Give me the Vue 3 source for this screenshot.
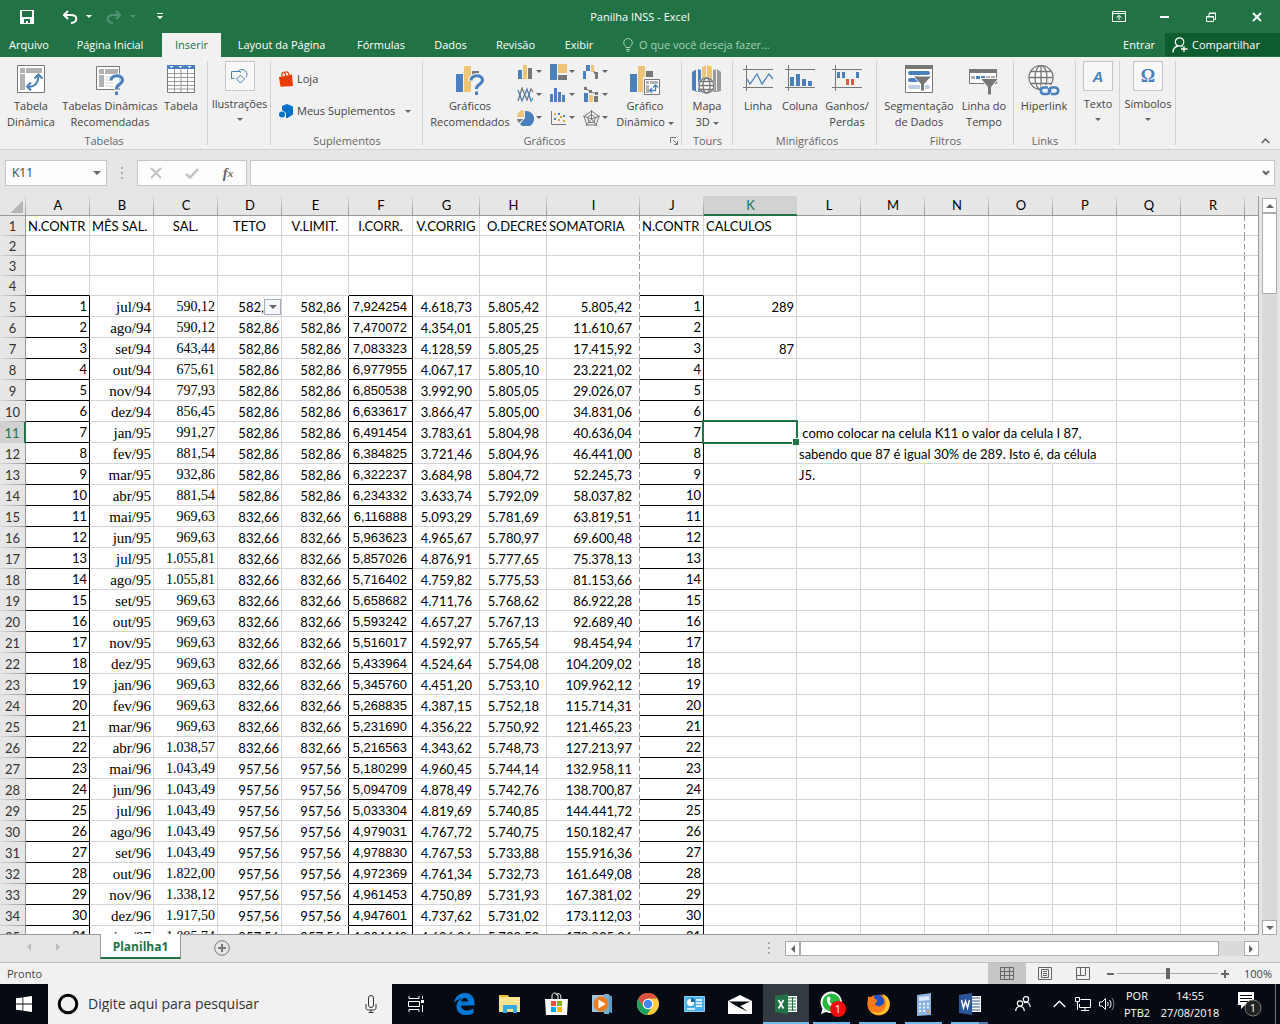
<script setup>
const tabs = ['Arquivo', 'Página Inicial', 'Inserir', 'Layout da Página', 'Fórmulas', 'Dados', 'Revisão', 'Exibir']
const letters = 'ABCDEFGHIJKLMNOPQR'.split('')
const titles = ['N.CONTR', 'MÊS SAL.', 'SAL.', 'TETO', 'V.LIMIT.', 'I.CORR.', 'V.CORRIG', 'O.DECRES', 'SOMATORIA', 'N.CONTR', 'CALCULOS']
const trailing = ['l', 'm', 'n', 'o', 'p', 'q', 'r', 's']

const raw = `jul/94 590,12 7,924254 4.618,73 5.805,42 5.805,42
ago/94 590,12 7,470072 4.354,01 5.805,25 11.610,67
set/94 643,44 7,083323 4.128,59 5.805,25 17.415,92
out/94 675,61 6,977955 4.067,17 5.805,10 23.221,02
nov/94 797,93 6,850538 3.992,90 5.805,05 29.026,07
dez/94 856,45 6,633617 3.866,47 5.805,00 34.831,06
jan/95 991,27 6,491454 3.783,61 5.804,98 40.636,04
fev/95 881,54 6,384825 3.721,46 5.804,96 46.441,00
mar/95 932,86 6,322237 3.684,98 5.804,72 52.245,73
abr/95 881,54 6,234332 3.633,74 5.792,09 58.037,82
mai/95 969,63 6,116888 5.093,29 5.781,69 63.819,51
jun/95 969,63 5,963623 4.965,67 5.780,97 69.600,48
jul/95 1.055,81 5,857026 4.876,91 5.777,65 75.378,13
ago/95 1.055,81 5,716402 4.759,82 5.775,53 81.153,66
set/95 969,63 5,658682 4.711,76 5.768,62 86.922,28
out/95 969,63 5,593242 4.657,27 5.767,13 92.689,40
nov/95 969,63 5,516017 4.592,97 5.765,54 98.454,94
dez/95 969,63 5,433964 4.524,64 5.754,08 104.209,02
jan/96 969,63 5,345760 4.451,20 5.753,10 109.962,12
fev/96 969,63 5,268835 4.387,15 5.752,18 115.714,31
mar/96 969,63 5,231690 4.356,22 5.750,92 121.465,23
abr/96 1.038,57 5,216563 4.343,62 5.748,73 127.213,97
mai/96 1.043,49 5,180299 4.960,45 5.744,14 132.958,11
jun/96 1.043,49 5,094709 4.878,49 5.742,76 138.700,87
jul/96 1.043,49 5,033304 4.819,69 5.740,85 144.441,72
ago/96 1.043,49 4,979031 4.767,72 5.740,75 150.182,47
set/96 1.043,49 4,978830 4.767,53 5.733,88 155.916,36
out/96 1.822,00 4,972369 4.761,34 5.732,73 161.649,08
nov/96 1.338,12 4,961453 4.750,89 5.731,93 167.381,02
dez/96 1.917,50 4,947601 4.737,62 5.731,02 173.112,03
jan/97 1.095,74 4,904440 4.696,26 5.730,53 178.835,36`
const rows = raw.split('\n').map((line, i) => {
  const [mes, sal, icorr, vcorr, decr, soma] = line.split(' ')
  const teto = i < 10 ? '582,86' : i < 22 ? '832,66' : '957,56'
  return { n: i + 1, num: i + 5, mes, sal, teto, icorr, vcorr, decr, soma }
})
const notes = {
  11: ' como colocar na celula K11 o valor da celula I 87,',
  12: 'sabendo que 87 é igual 30% de 289. Isto é, da célula',
}
const calc = { 5: '289', 7: '87' }
</script>

<template>
  <div class="app">
    <header class="titlebar">
      <div class="qat">
        <button class="q-save" aria-label="Salvar">
          <svg width="14" height="14" viewBox="0 0 14 14"><path fill="#fff" fill-rule="evenodd" d="M0 0h14v14H0zM2 1v6h10V1zM4 9v4h2v-2h2v2h2V9z" /></svg>
        </button>
        <button class="q-undo" aria-label="Desfazer">
          <svg width="16" height="14" viewBox="0 0 16 14" fill="none" stroke="#fff" stroke-width="2"><path d="M6 1L2 5l4 4M2 5h7c7 0 7 7 0 8" /></svg>
          <i class="tri light"></i>
        </button>
        <button class="q-redo" aria-label="Refazer">
          <svg width="16" height="14" viewBox="0 0 16 14" fill="none" stroke="#549373" stroke-width="2"><path d="M10 1l4 4-4 4M14 5H7C0 5 0 12 7 13" /></svg>
          <i class="tri dim"></i>
        </button>
        <button class="q-more" aria-label="Personalizar">
          <svg width="6" height="7" viewBox="0 0 6 7" fill="#fff"><path d="M0 0h6v1H0zM0 3h6L3 6z" /></svg>
        </button>
      </div>
      <h1>Panilha INSS - Excel</h1>
      <div class="winbtns">
        <button aria-label="Opções da Faixa"><svg width="14" height="11" viewBox="0 0 14 11" fill="none" stroke="#fff"><path d="M.5.5h13v10H.5zM.5 2.500h13M7 9V4.500M4.500 6.500L7 4.500l2.500 2" /></svg></button>
        <button aria-label="Minimizar"><svg width="10" height="3" viewBox="0 0 10 3"><path fill="#fff" d="M0 1h9v2H0z" /></svg></button>
        <button aria-label="Restaurar"><svg width="10" height="10" viewBox="0 0 10 10" fill="none" stroke="#fff"><path d="M.5 4.500h7v5h-7zM.5 5h7M3 4V1.500h6.500V7.500H8M3 1h7" /></svg></button>
        <button aria-label="Fechar"><svg width="10" height="10" viewBox="0 0 10 10" fill="none" stroke="#fff" stroke-width="2"><path d="M1 1l8 8M9 1L1 9" /></svg></button>
      </div>
    </header>

    <nav class="tabs">
      <div class="tablist">
        <button v-for="t in tabs" :key="t" :class="{ active: t === 'Inserir' }">{{ t }}</button>
      </div>
      <label class="tell">
        <svg width="10" height="14" viewBox="0 0 10 14" fill="none" stroke="#a6cfb8"><path d="M3 9.500C3 8 .7 7.500.7 4.700a4.300 4.200 0 018.600 0C9.300 7.500 7 8 7 9.500zM3 11.500h4M3.500 13.300h3" /></svg>
        <input type="text" placeholder="O que você deseja fazer..." />
      </label>
      <button class="entrar">Entrar</button>
      <button class="share">
        <svg width="16" height="16" viewBox="0 0 16 16" fill="none" stroke="#fff" stroke-width="1.300"><circle cx="7.500" cy="5" r="4.200" /><path d="M1 15.500C1.200 11.500 3 9.500 6 9M9.500 9.500l1 .5M12 9v6M9 12h6.500" /></svg>
        Compartilhar
      </button>
    </nav>

    <section class="ribbon">
      <div class="group g-tables">
        <div class="items">
          <button class="big w62">
            <svg width="28" height="28" viewBox="0 0 28 28"><path d="M.5.5h27v27H.5z" fill="#fff" stroke="#777" /><path d="M3 3h5v5H3zM9 3h16v5H9zM3 9h5v16H3z" fill="#b1b1b1" /><path d="M11 21.500c6 1 10-3 10.500-10M14 17.500l-4 4 4 4M17.500 13.500l4-4 4 4" fill="none" stroke="#4a80bd" stroke-width="2" /></svg>
            <span>Tabela<br />Dinâmica</span>
          </button>
          <button class="big w96">
            <svg width="28" height="30" viewBox="0 0 28 30"><path d="M.5 1.500h23v23H.5z" fill="#fff" stroke="#777" /><path d="M3 4h5v5H3zM9 4h13v5H9zM3 10h5v12H3z" fill="#b1b1b1" /><path d="M9 12h10M9 15h7M9 18h8M9 21h8" stroke="#d0d0d0" /><path d="M15 16c0-6 11-7 11-1 0 5-5.500 4-5.500 9.500M20.500 27v3" fill="none" stroke="#f1f1f1" stroke-width="5" /><path d="M15 15.500c0-6 11.500-6.500 11.500-.5 0 4.500-6 4-6 9M20.500 26.500v3.500" fill="none" stroke="#4a80bd" stroke-width="3" /></svg>
            <span>Tabelas Dinâmicas<br />Recomendadas</span>
          </button>
          <button class="big w46">
            <svg width="28" height="28" viewBox="0 0 28 28"><path d="M.5.5h27v27H.5z" fill="#fff" stroke="#777" /><path d="M7.500 4v23M14 4v23M20.500 4v23M1 8.500h26M1 12.500h26M1 16.500h26M1 20.500h26M1 24h26" stroke="#999" /><path d="M0 0h28v4H0z" fill="#4a80bd" /><path d="M2.500 1h4l-2 2zM11.500 1h4l-2 2zM20.500 1h4l-2 2z" fill="#fff" /></svg>
            <span>Tabela</span>
          </button>
        </div>
        <div class="gname">Tabelas</div>
      </div>
      <div class="group g-illus">
        <button class="folded">
          <span class="box"><svg width="17" height="15" viewBox="0 0 17 15" fill="#f8f8f8" stroke="#4a80bd"><circle cx="11" cy="5.500" r="5" /><path d="M.5 2.500h9v7h-9z" /><path d="M9.500 5.500l4.500 4.500-4.500 4.500L5 10z" stroke="#f8f8f8" stroke-width="3" /><path d="M9.500 6l4 4-4 4-4-4z" /></svg></span>
          <span>Ilustrações</span><i class="tri"></i>
        </button>
      </div>
      <div class="group g-addins">
        <div class="stack">
          <button><svg width="14" height="16" viewBox="0 0 14 16"><path d="M0 6l13-2.500 1 11.500L1.500 15.800z" fill="#eb3c00" /><path d="M3 5.500C2 .5 6 0 6.500 3.500V6M5.500 2.500C6 0 9.500 0 10 4" fill="none" stroke="#eb3c00" stroke-width="1.200" /></svg>Loja</button>
          <button><svg width="14" height="14" viewBox="0 0 14 14" fill="#0072c6"><path d="M3 2l5-2 6 2.500v8L8.500 14H7V9L3 6z" /><circle cx="3" cy="10.500" r="3" /></svg>Meus Suplementos<i class="tri"></i></button>
        </div>
        <div class="gname">Suplementos</div>
      </div>
      <div class="group g-charts">
        <div class="items">
          <button class="big w94">
            <svg width="28" height="30" viewBox="0 0 28 30"><path d="M0 9h7v18H0z" fill="#4a80bd" /><path d="M8 1h7v26H8z" fill="#eec577" /><path d="M16 6h7v4h-7z" fill="#777" /><path d="M15 16c0-6 11-7 11-1 0 5-5.500 4-5.500 9.500V30" fill="none" stroke="#f1f1f1" stroke-width="6" /><path d="M15 15.500c0-6 11.500-6.500 11.500-.5 0 4.500-6 4-6 9M20.500 26.500v3.500" fill="none" stroke="#4a80bd" stroke-width="3" /></svg>
            <span>Gráficos<br />Recomendados</span>
          </button>
          <div class="minis">
            <button aria-label="Colunas"><svg width="17" height="16" viewBox="0 0 17 16"><path d="M1 6h4v9H1z" fill="#4a80bd" /><path d="M6 1h4v14H6z" fill="#eec577" /><path d="M11 4h4v11h-4z" fill="#777" /></svg><i class="tri"></i></button>
            <button aria-label="Hierarquia"><svg width="17" height="16" viewBox="0 0 17 16"><path d="M0 0h7v16H0z" fill="#4a80bd" /><path d="M8 0h9v9H8z" fill="#eec577" /><path d="M8 11h9v5H8z" fill="#777" /></svg><i class="tri"></i></button>
            <button aria-label="Cascata"><svg width="17" height="16" viewBox="0 0 17 16"><path d="M0 7h3v8H0zM3 1h4v6H3z" fill="#4a80bd" /><path d="M8 1h3v7H8z" fill="#eec577" /><path d="M11 7h1v1h3v7h-3v-5h-1z" fill="#777" /></svg><i class="tri"></i></button>
            <button aria-label="Linhas"><svg width="17" height="16" viewBox="0 0 17 16" fill="none" stroke-width="1.300"><path d="M1 14L5 1l5 12 4-11 2 3" stroke="#777" /><path d="M1 3l4 11L10 2l4 12 2-3" stroke="#4a80bd" /></svg><i class="tri"></i></button>
            <button aria-label="Estatística"><svg width="17" height="16" viewBox="0 0 17 16"><path d="M0 7h3v8H0zM4 1h3v14H4zM8 5h3v10H8zM12 8h3v7h-3z" fill="#4a80bd" /></svg><i class="tri"></i></button>
            <button aria-label="Combinação"><svg width="17" height="16" viewBox="0 0 17 16"><path d="M1 6h4v9H1z" fill="#4a80bd" /><path d="M6 8h4v7H6z" fill="#eec577" /><path d="M11 9h4v6h-4z" fill="#777" /><path d="M2 1l6 4 6 2" fill="none" stroke="#777" /><path d="M1 0h3v3H1zM6 3h3v3H6zM12 5h3v3h-3z" fill="#777" /></svg><i class="tri"></i></button>
            <button aria-label="Pizza"><svg width="17" height="16" viewBox="0 0 17 16"><path d="M8 1v7l-5 6a8 8 0 1 0 5-13" fill="#4a80bd" /><path d="M7 0v7H0a7 7 0 017-7" fill="#eec577" /><path d="M0 9h6l-4 4A7 7 0 010 9" fill="#777" /></svg><i class="tri"></i></button>
            <button aria-label="Dispersão"><svg width="17" height="16" viewBox="0 0 17 16"><path d="M1.500 1v13.500H16" fill="none" stroke="#777" /><path d="M4 8h2v2H4zM8 3h2v2H8zM13 5h2v2h-2z" fill="#4a80bd" /><path d="M4 3h2v2H4zM8 9h2v2H8zM10 6h2v2h-2zM13 10h2v2h-2z" fill="#dfa242" /></svg><i class="tri"></i></button>
            <button aria-label="Radar"><svg width="17" height="16" viewBox="0 0 17 16" fill="none" stroke="#777"><path d="M8.500 1L16 6.500 13 15H4L1 6.500zM8.500 4.500l4 3-1.500 5H6L4.500 7.500zM8.500 0v9M0 6l8.500 3L17 6M3 16l5.500-7L14 16" /></svg><i class="tri"></i></button>
          </div>
          <button class="big w58">
            <svg width="30" height="30" viewBox="0 0 30 30"><path d="M0 9h7v18H0z" fill="#4a80bd" /><path d="M8 1h7v26H8z" fill="#eec577" /><path d="M16 6h7v7h-7z" fill="#777" /><path d="M13 12h17v18H13z" fill="#f1f1f1" /><path d="M14.500 14.500h15v15h-15z" fill="#fff" stroke="#777" /><path d="M16 16h3v3h-3zM20 16h8v3h-8zM16 20h3v8h-3z" fill="#b1b1b1" /><path d="M20 25.500h5.500V20M22 23l-2.500 2.500L22 28M23 22.500l2.500-2.500 2.500 2.500" fill="none" stroke="#4a80bd" stroke-width="1.300" /></svg>
            <span>Gráfico<br />Dinâmico <i class="tri"></i></span>
          </button>
        </div>
        <div class="gname launch"><span>Gráficos</span>
          <button aria-label="Mais"><svg width="8" height="8" viewBox="0 0 8 8" fill="none" stroke="#777"><path d="M.5 6V.5H6M3 3l4 4M7.500 4v3.500H4" /></svg></button>
        </div>
      </div>
      <div class="group g-tours">
        <div class="items">
          <button class="big w50">
            <svg width="30" height="30" viewBox="0 0 30 30"><path d="M0 7l5-3v23l-5-2zM6 4l3 1v22H6z" fill="#4a80bd" /><path d="M10 2l5-2 5 2v20H10z" fill="#eec577" /><path d="M21 5l4-1 4 3v19l-4 1h-4z" fill="#999" /><path d="M9.500 1v22M14.500 0v22M24.500 4v22M4.500 4v22" stroke="#f1f1f1" /><circle cx="14.500" cy="20.500" r="8.500" fill="#f1f1f1" /><g fill="#fff" stroke="#777" stroke-width="1.300"><circle cx="14.500" cy="20.500" r="7.500" /><ellipse cx="14.500" cy="20.500" rx="3.500" ry="7.500" /><path d="M7 20.500h15M8.500 16.500h12M8.500 24.500h12" /></g></svg>
            <span>Mapa<br />3D <i class="tri"></i></span>
          </button>
        </div>
        <div class="gname">Tours</div>
      </div>
      <div class="group g-spark">
        <div class="items">
          <button class="big w42">
            <svg width="30" height="26" viewBox="0 0 30 26" fill="none"><path d="M0 4.500h30M0 22.500h30M3.500 0v26" stroke="#777" /><path d="M4 14l3 5 7-10 5 10 7-10 4 5" stroke="#4a80bd" stroke-width="1.300" /></svg>
            <span>Linha</span>
          </button>
          <button class="big w42">
            <svg width="30" height="26" viewBox="0 0 30 26"><path d="M0 4.500h30M0 22.500h30M3.500 0v26" stroke="#777" /><path d="M5 12h4v9H5zM11 9h4v12h-4zM17 14h4v7h-4zM23 16h4v5h-4z" fill="#4a80bd" /></svg>
            <span>Coluna</span>
          </button>
          <button class="big w52">
            <svg width="30" height="26" viewBox="0 0 30 26"><path d="M0 4.500h30M0 22.500h30M3.500 0v26" stroke="#777" /><path d="M5 7h3v6H5zM10 7h3v6h-3zM24 7h3v6h-3z" fill="#4a80bd" /><path d="M14 14h3v6h-3zM19 14h3v6h-3z" fill="#d9603b" /></svg>
            <span>Ganhos/<br />Perdas</span>
          </button>
        </div>
        <div class="gname">Minigráficos</div>
      </div>
      <div class="group g-filters">
        <div class="items">
          <button class="big w84">
            <svg width="28" height="28" viewBox="0 0 28 28"><path d="M.5.5h27v27H.5z" fill="#fff" stroke="#777" /><path d="M0 0h28v4H0z" fill="#777" /><path d="M5 8h18M5 15h9" stroke="#4a80bd" stroke-width="4" stroke-linecap="round" /><path d="M5 22h18" stroke="#bdd0ea" stroke-width="4" stroke-linecap="round" /><path d="M8 11h19l-7.500 8v7h-4v-7z" fill="#777" stroke="#fff" /></svg>
            <span>Segmentação<br />de Dados</span>
          </button>
          <button class="big w46">
            <svg width="30" height="30" viewBox="0 0 30 30"><path d="M.5 4.500h27v14H.5z" fill="#fff" stroke="#777" /><path d="M0 4h28v4H0z" fill="#777" /><path d="M2 11h4v3H2zM17 11h4v3h-4zM22 11h4v3h-4z" fill="#b1b1b1" /><path d="M7 11h4v3H7zM12 11h4v3h-4z" fill="#4a80bd" /><path d="M11.500 13.500h18l-7 8.500v8h-4v-8z" fill="#777" stroke="#f1f1f1" /></svg>
            <span>Linha do<br />Tempo</span>
          </button>
        </div>
        <div class="gname">Filtros</div>
      </div>
      <div class="group g-links">
        <div class="items">
          <button class="big w60">
            <svg width="32" height="31" viewBox="0 0 32 31" fill="none"><g stroke="#777" stroke-width="1.300" fill="#fff"><circle cx="13" cy="12.500" r="12" /><ellipse cx="13" cy="12.500" rx="6" ry="12" /><path d="M13 .5v24M1 12.500h24M3 6.500h20M3 18.500h20" /></g><path d="M13 20h19v11H13z" fill="#f1f1f1" /><g stroke="#4a80bd" stroke-width="2.500"><path d="M20 22.500h-4.500a3.300 3.300 0 000 6.500H19a3.300 3.300 0 003-4.500M23 29h4.500a3.300 3.300 0 000-6.500H24a3.300 3.300 0 00-3 4.500" /></g></svg>
            <span>Hiperlink</span>
          </button>
        </div>
        <div class="gname">Links</div>
      </div>
      <div class="group g-text">
        <button class="folded"><span class="box glyph ital">A</span><span>Texto</span><i class="tri"></i></button>
      </div>
      <div class="group g-sym">
        <button class="folded"><span class="box glyph">Ω</span><span>Símbolos</span><i class="tri"></i></button>
      </div>
      <button class="collapse" aria-label="Recolher"><svg width="9" height="6" viewBox="0 0 9 6" fill="none" stroke="#666" stroke-width="1.700"><path d="M.7 5l3.800-3.800L8.300 5" /></svg></button>
    </section>

    <section class="fbar">
      <div class="namebox"><input type="text" value="K11" aria-label="Caixa de nome" /><button aria-label="Abrir lista"><i class="tri big-tri"></i></button></div>
      <span class="dots"></span>
      <div class="fbtns">
        <button aria-label="Cancelar"><svg width="12" height="12" viewBox="0 0 12 12" fill="none" stroke="#c1c1c1" stroke-width="2"><path d="M1 1l10 10M11 1L1 11" /></svg></button>
        <button aria-label="Inserir"><svg width="14" height="11" viewBox="0 0 14 11" fill="none" stroke="#c1c1c1" stroke-width="2.500"><path d="M1 6l4 3.500L13 1" /></svg></button>
        <button class="fx" aria-label="Inserir função">f<small>x</small></button>
      </div>
      <div class="finput"><input type="text" aria-label="Fórmula" /><button aria-label="Expandir"><svg width="8" height="6" viewBox="0 0 8 6" fill="none" stroke="#666" stroke-width="2"><path d="M1 1l3 3 3-3" /></svg></button></div>
    </section>

    <main class="sheet">
      <div class="grid">
        <table>
          <colgroup>
            <col class="c-row" /><col span="4" class="c64" /><col class="c67" /><col class="c64" /><col span="2" class="c67" /><col class="c93" /><col class="c64" /><col class="c93" /><col span="7" class="c64" /><col />
          </colgroup>
          <thead>
            <tr>
              <th class="corner"></th>
              <th v-for="l in letters" :key="l" :class="{ sel: l === 'K' }">{{ l }}</th>
              <th class="last"></th>
            </tr>
          </thead>
          <tbody>
            <tr class="short">
              <th>1</th>
              <td v-for="(t, i) in titles" :key="i" :class="['t' + i, { brk: i === 8 }]">{{ t }}</td>
              <td v-for="c in trailing" :key="c" :class="{ brk: c === 'r', last: c === 's' }"></td>
            </tr>
            <tr v-for="r in [2, 3, 4]" :key="r" class="short">
              <th>{{ r }}</th>
              <td v-for="c in 19" :key="c" :class="{ brk: c === 9 || c === 18, last: c === 19, blk: r === 4 && (c === 1 || c === 6 || c === 10) }"></td>
            </tr>
            <tr v-for="r in rows" :key="r.num">
              <th :class="{ sel: r.num === 11 }">{{ r.num }}</th>
              <td class="num up blk blkr">{{ r.n }}</td>
              <td class="num serif">{{ r.mes }}</td>
              <td class="num serif small">{{ r.sal }}</td>
              <td class="num over">{{ r.teto }}<button v-if="r.num === 5" class="drop" aria-label="Abrir opções"><i class="tri big-tri"></i></button></td>
              <td class="num pad7 blkr">{{ r.teto }}</td>
              <td class="num arial blk blkr">{{ r.icorr }}</td>
              <td class="num pad7">{{ r.vcorr }}</td>
              <td class="num pad7">{{ r.decr }}</td>
              <td class="num pad7 brk">{{ r.soma }}</td>
              <td class="num up blk blkr">{{ r.n }}</td>
              <td class="num over">{{ calc[r.num] }}<span v-if="r.num === 11" class="cursor"></span></td>
              <template v-if="notes[r.num]">
                <td colspan="5" class="note">{{ notes[r.num] }}</td>
                <td></td><td class="brk"></td><td class="last"></td>
              </template>
              <template v-else>
                <td v-for="c in trailing" :key="c" :class="{ brk: c === 'r', last: c === 's' }">{{ c === 'l' && r.num === 13 ? 'J5.' : '' }}</td>
              </template>
            </tr>
          </tbody>
        </table>
      </div>
      <div class="vscroll">
        <button aria-label="Para cima"><i class="tri up-tri"></i></button>
        <span class="thumb"></span>
        <span class="track"></span>
        <button aria-label="Para baixo"><i class="tri big-tri"></i></button>
      </div>
    </main>

    <section class="sheetbar">
      <div class="sheetnav">
        <button aria-label="Anterior"><svg width="4" height="8" viewBox="0 0 4 8"><path d="M4 0v8L0 4z" fill="#bcbcbc" /></svg></button>
        <button aria-label="Próxima"><svg width="4" height="8" viewBox="0 0 4 8"><path d="M0 0v8l4-4z" fill="#bcbcbc" /></svg></button>
      </div>
      <button class="sheettab">Planilha1</button>
      <button class="add" aria-label="Nova planilha"><svg width="16" height="16" viewBox="0 0 16 16" fill="none" stroke="#777"><circle cx="8" cy="8" r="7.300" /><path d="M8 4v8M4 8h8" stroke-width="2" /></svg></button>
      <span class="dots"></span>
      <div class="hscroll">
        <button aria-label="Esquerda"><svg width="5" height="8" viewBox="0 0 5 8"><path d="M5 0v8L1 4z" fill="#666" /></svg></button>
        <span class="thumb"></span><span class="track"></span>
        <button aria-label="Direita"><svg width="5" height="8" viewBox="0 0 5 8"><path d="M0 0v8l4-4z" fill="#666" /></svg></button>
      </div>
    </section>

    <footer class="status">
      <span class="ready">Pronto</span>
      <button class="view on" aria-label="Normal"><svg width="14" height="13" viewBox="0 0 14 13" fill="none" stroke="#666"><path d="M.5.5h13v12H.5zM4.500 0v13M9.500 0v13M0 4.500h14M0 8.500h14" /></svg></button>
      <button class="view" aria-label="Layout da Página"><svg width="14" height="13" viewBox="0 0 14 13" fill="none" stroke="#666"><path d="M.5.5h13v12H.5zM3.500 2.500h7v8h-7zM5 4.500h4M5 6.500h4M5 8.500h4" /></svg></button>
      <button class="view" aria-label="Quebra de Página"><svg width="14" height="13" viewBox="0 0 14 13" fill="none" stroke="#666"><path d="M.5.5h13v12H.5zM4.500 1v7M9.500 1v7M.5 8.500h9" /></svg></button>
      <button class="zoom minus" aria-label="Menos"><svg width="7" height="8" viewBox="0 0 7 8"><path d="M0 3h7v2H0z" fill="#666" /></svg></button>
      <input type="range" min="0" max="100" value="50" aria-label="Zoom" />
      <button class="zoom" aria-label="Mais"><svg width="8" height="8" viewBox="0 0 8 8"><path d="M0 3h8v2H0zM3 0h2v8H3z" fill="#666" /></svg></button>
      <span class="pct">100%</span>
    </footer>

    <nav class="taskbar">
      <button class="start" aria-label="Iniciar"><svg width="16" height="16" viewBox="0 0 16 16" fill="#fff"><path d="M0 2.300l6.500-.9v6.200H0zM7.300 1.300L16 0v7.600H7.300zM0 8.400h6.500v6.200L0 13.700zM7.300 8.400H16V16l-8.700-1.300z" /></svg></button>
      <label class="search">
        <svg width="22" height="22" viewBox="0 0 22 22"><circle cx="11" cy="11" r="8.800" fill="none" stroke="#000" stroke-width="3" /></svg>
        <input type="text" placeholder="Digite aqui para pesquisar" />
        <svg width="12" height="18" viewBox="0 0 12 18" fill="none" stroke="#333"><rect x="3.500" y=".5" width="5" height="12" rx="2.500" /><path d="M1 9v3.500c0 2 1 2.500 2.500 2.500h5c1.500 0 2.500-.5 2.500-2.500V9M6 15v2.500M3.500 17.500h5" /></svg>
      </label>
      <button class="tview" aria-label="Visão de tarefas"><svg width="17" height="16" viewBox="0 0 17 16" fill="none" stroke="#fff"><path d="M1 0v2.500h10V0M.5 5.500h11v5H.5zM1 16v-2.500h10V16M14.500 0v3M14.500 9v7" /><path d="M13 4h3v3h-3z" fill="#fff" stroke="none" /></svg></button>
      <button class="app-ic" aria-label="Edge"><svg width="21" height="22" viewBox="0 0 21 22"><path fill="#0078d7" d="M0 10C1 3 6 0 11 0c7 0 10 5 9.500 12.500H7c.3 6 8 6 12.500 3v4.800C12 24 2.500 22 2.500 13.500c0-4 2.500-6.500 5-8C4.500 6 2 7.500 0 10zm7-1.500h7c0-4.500-6-5-7 0z" /></svg></button>
      <button class="app-ic" aria-label="Explorador"><svg width="22" height="20" viewBox="0 0 22 20"><path d="M0 1h9l1 2h11v15H0z" fill="#ffe391" /><path d="M0 1h9v2H0z" fill="#f5b92e" /><path d="M4 19v-8h14v8h-4v-4H8v4z" fill="#35aae2" /></svg></button>
      <button class="app-ic" aria-label="Loja"><svg width="23" height="24" viewBox="0 0 23 24"><path d="M7 7V4c0-4 5-4 6 0v3M11 3c3-3 5-1 5 4" fill="none" stroke="#fff" /><path d="M0 7h23l-1 16H1z" fill="#fff" /><path d="M6 9h5v5H6z" fill="#f25022" /><path d="M12 9h5v5h-5z" fill="#7fba00" /><path d="M6 15h5v5H6z" fill="#00a4ef" /><path d="M12 15h5v5h-5z" fill="#ffb900" /></svg></button>
      <button class="app-ic" aria-label="Media Player"><svg width="20" height="20" viewBox="0 0 20 20"><path d="M0 1h16v17H0z" fill="#9fc4dd" /><path d="M16 1l4 1v17l-4-1z" fill="#5e9cc4" /><path d="M12 0h5v20h-5z" fill="#74aed0" /><circle cx="9" cy="10" r="7.500" fill="#ef7d22" /><path d="M6.500 5.500v9l7-4.500z" fill="#fff" /></svg></button>
      <button class="app-ic" aria-label="Chrome"><svg width="22" height="22" viewBox="0 0 22 22"><circle cx="11" cy="11" r="11" fill="#ffcd42" /><path d="M1.500 5.500A11 11 0 0120.500 5.500H11L6 13.500z" fill="#dd4f43" /><path d="M1.500 5.500A11 11 0 0010 22l5-8.500L11 16 6 13.500z" fill="#1ba260" /><circle cx="11" cy="11" r="5.200" fill="#fff" /><circle cx="11" cy="11" r="4.200" fill="#4285f4" /></svg></button>
      <button class="app-ic" aria-label="Painel"><svg width="21" height="16" viewBox="0 0 21 16"><rect width="21" height="16" rx="1" fill="#8ad1f7" /><path d="M1 1h19v14H1z" fill="#49b2ee" /><circle cx="6.500" cy="6.500" r="3.500" fill="#fff" /><path d="M7 6V2a4 4 0 014 4z" fill="#1c65a9" /><path d="M12 4h6M12 7h6M12 10h6M3 13h8" stroke="#fff" stroke-width="1.500" /></svg></button>
      <button class="app-ic" aria-label="Email"><svg width="24" height="19" viewBox="0 0 24 19"><path d="M0 6l12-6 12 6v13H0z" fill="#fff" /><path d="M1 6.500h21L12.500 11l7 5.500L10 12z" fill="#060a12" /></svg></button>
      <button class="app-ic on" aria-label="Excel"><svg width="22" height="20" viewBox="0 0 22 20"><path d="M12 2h10v16H12z" fill="#fff" /><path d="M13 4h8M13 7h8M13 10h8M13 13h8M13 16h8M17.500 3v14" stroke="#217346" /><path d="M0 2l13-2v20L0 18z" fill="#217346" /><path d="M3.500 6l5 8.500M8.500 6l-5 8.500" stroke="#fff" stroke-width="1.700" /></svg></button>
      <button class="app-ic run" aria-label="WhatsApp"><svg width="24" height="26" viewBox="0 0 24 26" overflow="visible"><path d="M1 23l1.500-5.500A10.700 10.700 0 1111.500 22 11 11 0 016 21z" fill="#fff" /><circle cx="11.500" cy="11.500" r="9" fill="#25b83b" /><path d="M7 7c2-3 3-1 3.500 1 .5 1-1 1-1 2 1 2 2 3 4 4 1 0 1-2 2.500-1 3 1 1 4-2 4-4-1-8-5-7-10z" fill="#fff" /><circle cx="18" cy="18" r="8" fill="#f60a0a" /><text x="18" y="22" class="badge">1</text></svg></button>
      <button class="app-ic run" aria-label="Firefox"><svg width="23" height="23" viewBox="0 0 23 23"><circle cx="11.500" cy="11.500" r="10" fill="#234fc4" /><path d="M1 3c1 1 2 1 3 1C5 3 7 2 8 2 6 4 7 6 10 7c1 2-2 2-2 4 2 4 8 2 9-1 1-4-2-6-4-8 7 0 10 5 9.500 11C21 25 3 26 .5 13 0 10 1 8 1 3z" fill="#ff7b18" /><path d="M15 1c7 2 9 8 7 14-3 8-14 9-18 3 6 3 12 2 14-3 2-4 1-9-3-14z" fill="#ffc62a" /></svg></button>
      <button class="app-ic run" aria-label="Calculadora"><svg width="16" height="23" viewBox="0 0 16 23"><path d="M1 2l14-2v22L1 23z" fill="#8fb3e4" /><path d="M3 4l10-1v4L3 8z" fill="#dce9fa" /><path d="M3 11h10M3 14.500h10M3 18h10" stroke="#e8f0fc" stroke-width="2" stroke-dasharray="2 2" /><path d="M11 17h2v3h-2z" fill="#ee8f4a" /></svg></button>
      <button class="app-ic run two" aria-label="Word"><svg width="22" height="22" viewBox="0 0 22 22"><path d="M12 3h10v16H12z" fill="#fff" /><path d="M13 5h8M13 8h8M13 11h8M13 14h8M13 17h8" stroke="#2b579a" /><path d="M0 2l13-2v22L0 20z" fill="#2b579a" /><path d="M2.500 7l2 8 2-7 2 7 2-8" fill="none" stroke="#fff" stroke-width="1.400" /></svg></button>
      <div class="tray">
        <button class="people" aria-label="Pessoas"><svg width="16" height="16" viewBox="0 0 16 16" fill="none" stroke="#fff" stroke-width="1.200"><circle cx="5" cy="7.500" r="2.700" /><path d="M.7 15c.3-6 8.300-6 8.600 0" /><circle cx="11" cy="3.300" r="2.700" /><path d="M9 7c3-2 6 0 6.300 4" /></svg></button>
        <button class="t24" aria-label="Mostrar ícones"><svg width="13" height="8" viewBox="0 0 13 8" fill="none" stroke="#fff" stroke-width="1.300"><path d="M.7 7l5.800-5.800L12.300 7" /></svg></button>
        <button class="t24" aria-label="Rede"><svg width="16" height="14" viewBox="0 0 16 14" fill="none" stroke="#fff"><path d="M5.500 2.500h10v8h-11V7M10 11v2.500M6 13.500h8M.5.500h4v4h-4zM2.500 5v8" /></svg></button>
        <button class="t24" aria-label="Volume"><svg width="16" height="14" viewBox="0 0 16 14" fill="none" stroke="#fff"><path d="M.5 5H3l3.500-3.500v11L3 9H.5zM8.500 5c1 1.500 1 2.500 0 4M10.500 3c2 3 2 5 0 8" /><path d="M13 1c2.500 4 2.500 8 0 12" stroke="#888" /></svg></button>
        <button class="lang">POR<br />PTB2</button>
        <button class="clock">14:55<br />27/08/2018</button>
        <button class="notif" aria-label="Notificações"><svg width="26" height="26" viewBox="0 0 26 26"><path d="M1 1h16v13h-9l-4 4v-4H1z" fill="#fff" /><path d="M3 4.500h12M3 7.500h12M3 10.500h8" stroke="#060a12" /><circle cx="16" cy="17" r="8" fill="#222" stroke="#777" /><text x="16" y="21" class="badge">1</text></svg></button>
        <button class="desk" aria-label="Área de trabalho"></button>
      </div>
    </nav>
  </div>
</template>

<style>
body { margin: 0; }
</style>

<style scoped>
.app { height: 100vh; display: flex; flex-direction: column; overflow: hidden; background: #e6e6e6; color: #444; font: 11px/16px "Open Sans", "Noto Sans", sans-serif; }
* { box-sizing: border-box; }
button { display: flex; align-items: center; justify-content: center; margin: 0; padding: 0; border: 0; background: none; color: inherit; font: inherit; white-space: nowrap; }
input { min-width: 0; margin: 0; padding: 0; border: 0; outline: 0; background: none; color: inherit; font: inherit; }
svg { display: block; flex: none; }
.tri { display: inline-block; flex: none; border: 3px solid transparent; border-top-color: #666; border-bottom: 0; vertical-align: middle; }
.tri.light { border-top-color: #fff; }
.tri.dim { border-top-color: #549373; }
.tri.big-tri { border-width: 4px; border-bottom: 0; }
.tri.up-tri { border: 4px solid transparent; border-top: 0; border-bottom-color: #666; }

.titlebar { flex: none; height: 33px; display: grid; grid-template-columns: 1fr auto 1fr; align-items: center; background: #217346; color: #fff; }
.titlebar h1 { margin: 0; font-size: 11px; font-weight: 400; }
.qat { display: flex; height: 30px; padding-left: 20px; }
.q-save { width: 14px; }
.q-undo { margin-left: 28px; gap: 8px; }
.q-redo { margin-left: 14px; gap: 8px; }
.q-more { margin-left: 21px; }
.winbtns { display: flex; justify-content: flex-end; }
.winbtns button { width: 46px; height: 31px; }

.tabs { flex: none; height: 24px; display: flex; background: #217346; color: #fff; }
.tablist { display: grid; grid-template-columns: 58px 104px 59px 121px 78px 61px 69px 58px; }
.tabs .active { background: #f1f1f1; color: #217346; }
.tell { flex: 1; display: flex; align-items: center; gap: 6px; padding-left: 15px; }
.tell input { flex: 1; }
.tell input::placeholder { color: #a6cfb8; opacity: 1; }
.entrar { padding: 0 10px; }
.share { width: 115px; height: 23px; padding-left: 7px; gap: 4px; justify-content: flex-start; background: #0f5c2f; }

.ribbon { flex: none; display: flex; height: 93px; background: #f1f1f1; border-bottom: 1px solid #d2d2d2; }
.group { flex: none; display: flex; flex-direction: column; justify-content: space-between; background: linear-gradient(#d2d2d2, #d2d2d2) right 4px / 1px 84px no-repeat; }
.g-tables { width: 208px; }
.g-illus { width: 63px; }
.g-addins { width: 152px; }
.g-charts { width: 259px; }
.g-tours { width: 51px; }
.g-spark { width: 144px; padding-left: 4px; }
.g-filters { width: 137px; }
.g-links { width: 62px; }
.g-text { width: 44px; }
.g-sym { width: 56px; }
.items { display: flex; }
.big { display: grid; grid-template-rows: 33px auto; justify-items: center; align-items: start; align-content: start; align-self: flex-start; padding-top: 8px; line-height: 16px; }
.w42 { width: 42px; }
.w46 { width: 46px; }
.w50 { width: 50px; }
.w52 { width: 52px; }
.w58 { width: 58px; }
.w60 { width: 60px; }
.w62 { width: 62px; }
.w84 { width: 84px; }
.w94 { width: 94px; }
.w96 { width: 96px; }
.gname { text-align: center; color: #666; }
.launch { display: flex; }
.launch span { flex: 1; }
.launch button { width: 16px; }
.folded { flex-direction: column; justify-content: flex-start; padding-top: 4px; }
.folded .tri { margin-top: 6px; }
.box { display: flex; align-items: center; justify-content: center; width: 30px; height: 30px; margin-bottom: 5px; border: 1px solid #c6c6c6; background: #f8f8f8; }
.glyph { color: #4a80bd; font: bold 18px "Liberation Serif", serif; }
.ital { font: italic bold 15px "Liberation Sans", sans-serif; }
.stack { padding: 6px 0 0 8px; }
.stack button { height: 32px; gap: 4px; }
.stack .tri { margin-left: 6px; }
.minis { display: grid; grid-template-columns: repeat(3, 33px); grid-auto-rows: 23px; padding-top: 3px; }
.minis button { gap: 2px; justify-content: flex-start; }
.collapse { margin-left: auto; align-self: flex-end; width: 30px; height: 16px; }

.fbar { flex: none; display: flex; height: 46px; padding: 10px 5px 10px 5px; }
.namebox, .fbtns, .finput { display: flex; border: 1px solid #c6c6c6; background: #fdfdfd; }
.namebox { width: 102px; font-size: 12px; }
.namebox input { flex: 1; padding-left: 6px; }
.namebox button { width: 18px; }
.dots { width: 2px; height: 12px; margin: auto 14px; background: repeating-linear-gradient(#aaa 0 2px, transparent 2px 5px); }
.fbtns { width: 110px; }
.fbtns button { flex: 1; }
.fbtns .fx { color: #666; font: italic bold 15px "Liberation Serif", serif; }
.fx small { font-size: 11px; }
.finput { flex: 1; margin-left: 3px; }
.finput input { flex: 1; }
.finput button { width: 16px; }

.sheet { flex: 1; min-height: 0; display: flex; }
.grid { flex: 1; min-width: 0; overflow: hidden; border-right: 1px solid #999; border-bottom: 1px solid #999; background: #fff; }
table { width: 100%; table-layout: fixed; border-collapse: separate; border-spacing: 0; color: #000; font: 13px/18px Lato, sans-serif; }
.c-row { width: 26px; }
.c64 { width: 64px; }
.c67 { width: 67px; }
.c93 { width: 93px; }
td, th { position: relative; height: 21px; padding: 0 2px; border: 0 solid #d4d4d4; border-width: 0 1px 1px 0; overflow: hidden; white-space: pre; font-weight: 400; vertical-align: bottom; }
.short td, .short th { height: 20px; }
thead th { height: 20px; padding-bottom: 1px; line-height: 17px; border-color: #999; border-right-width: 0; background: linear-gradient(#d8d8d8, #999) right / 1px 100% no-repeat #e6e6e6; }
thead .last { background: #e6e6e6; }
thead .corner { background: linear-gradient(135deg, transparent 50%, #b4b4b4 50%) 11px 5px / 12px 12px no-repeat, linear-gradient(#d8d8d8, #999) right / 1px 100% no-repeat #e6e6e6; }
tbody th { padding: 0 1px 1px; color: #333; border-bottom-width: 0; border-right-color: #999; background: linear-gradient(90deg, #d8d8d8, #999) bottom / 100% 1px no-repeat #e6e6e6; }
thead .sel { padding-bottom: 0; background: #d2d2d2; color: #217346; border-bottom: 2px solid #217346; }
tbody .sel { background: #d2d2d2; color: #217346; border-right: 2px solid #217346; }
.last { border-right-width: 0; }
.num { text-align: right; }
.up { padding-bottom: 1px; }
.serif { font-family: "Liberation Serif", serif; font-size: 15px; }
.small { font-size: 14px; }
.arial { font-family: "Liberation Sans", sans-serif; padding-right: 5px; }
.pad7 { padding-right: 7px; }
.blk { border-bottom-color: #000; }
.blkr { border-right-color: #000; }
.brk { border-right-width: 0; background: repeating-linear-gradient(#999 0 5px, #fff 5px 8px) right / 1px 100% no-repeat; }
.pad7.brk { padding-right: 8px; }
.over { overflow: visible; }
.t2, .t3, .t4, .t5, .t6 { text-align: center; }
.t7 { padding-left: 7px; padding-right: 0; }
.drop { position: absolute; right: 0; bottom: 1px; width: 17px; height: 16px; border: 1px solid #a3abb8; background: #f6f8fb; }
.cursor { position: absolute; z-index: 1; inset: -2px; border: 2px solid #217346; }
.cursor::after { content: ""; position: absolute; right: -3px; bottom: -3px; width: 6px; height: 6px; border: 1px solid #fff; border-width: 1px 0 0 1px; background: #217346; }

.vscroll { width: 15px; margin: 2px 3px 0 3px; display: flex; flex-direction: column; }
.vscroll button, .hscroll button { flex: none; width: 15px; height: 15px; border: 1px solid #ababab; background: #fff; }
.thumb { border: 1px solid #ababab; background: #fff; }
.vscroll .thumb { height: 81px; }
.track { flex: 1; background: #dadada; }

.sheetbar { flex: none; display: flex; height: 28px; padding-right: 21px; border-bottom: 1px solid #c0c0c0; }
.sheetnav { width: 100px; display: flex; padding: 0 28px 3px 15px; }
.sheetnav button { flex: 1; }
.sheettab { position: relative; width: 81px; height: 25px; margin-top: -1px; padding-top: 3px; border: 1px solid #999; border-width: 0 1px 2px 1px; border-bottom-color: #217346; background: #fff; color: #217346; font-size: 12px; font-weight: 700; }
.add { width: 82px; height: 26px; }
.sheetbar > .dots { margin: 7px 15px 0 auto; }
.hscroll { width: 474px; height: 15px; margin-top: 6px; display: flex; }
.hscroll .thumb { flex: 419; }
.hscroll .track { flex: 25; }

.status { flex: none; display: flex; align-items: center; height: 21px; background: #f1f1f1; }
.ready { flex: 1; padding-left: 7px; }
.view { width: 38px; height: 21px; }
.view.on { background: #c6c6c6; }
.zoom { width: 12px; }
.minus { margin-left: 2px; }
.status input { width: 101px; height: 12px; appearance: none; background: linear-gradient(#aaa, #aaa) center / 100% 1px no-repeat; margin: 0 1px; }
.status input::-webkit-slider-thumb { appearance: none; width: 4px; height: 11px; background: #666; }
.pct { width: 49px; padding-right: 8px; text-align: right; }

.taskbar { flex: none; display: flex; height: 40px; background: #060a12; color: #fff; }
.start { width: 48px; }
.search { width: 344px; display: flex; align-items: center; padding: 0 15px 0 9px; background: #f1f1f1; color: #333; font-size: 14px; }
.search input { flex: 1; padding-left: 9px; }
.search input::placeholder { color: #333; opacity: 1; }
.tview { width: 49px; }
.app-ic { position: relative; width: 46px; }
.app-ic.on { background: #343a41; }
.app-ic.on::after, .app-ic.run::after { content: ""; position: absolute; left: 4px; right: 5px; bottom: 0; height: 2px; background: #76b9ed; }
.app-ic.on::after { left: 0; right: 0; }
.app-ic.two::after { background: linear-gradient(90deg, #76b9ed 75%, #4c7ba3 75%); }
.badge { fill: #fff; font: 11px "Open Sans", sans-serif; text-anchor: middle; }
.tray { display: flex; margin-left: auto; }
.people { width: 48px; }
.t24 { width: 24px; }
.lang { width: 36px; line-height: 17px; }
.clock { width: 70px; line-height: 17px; }
.notif { width: 50px; }
.desk { width: 5px; border-left: 1px solid #777; }
</style>
